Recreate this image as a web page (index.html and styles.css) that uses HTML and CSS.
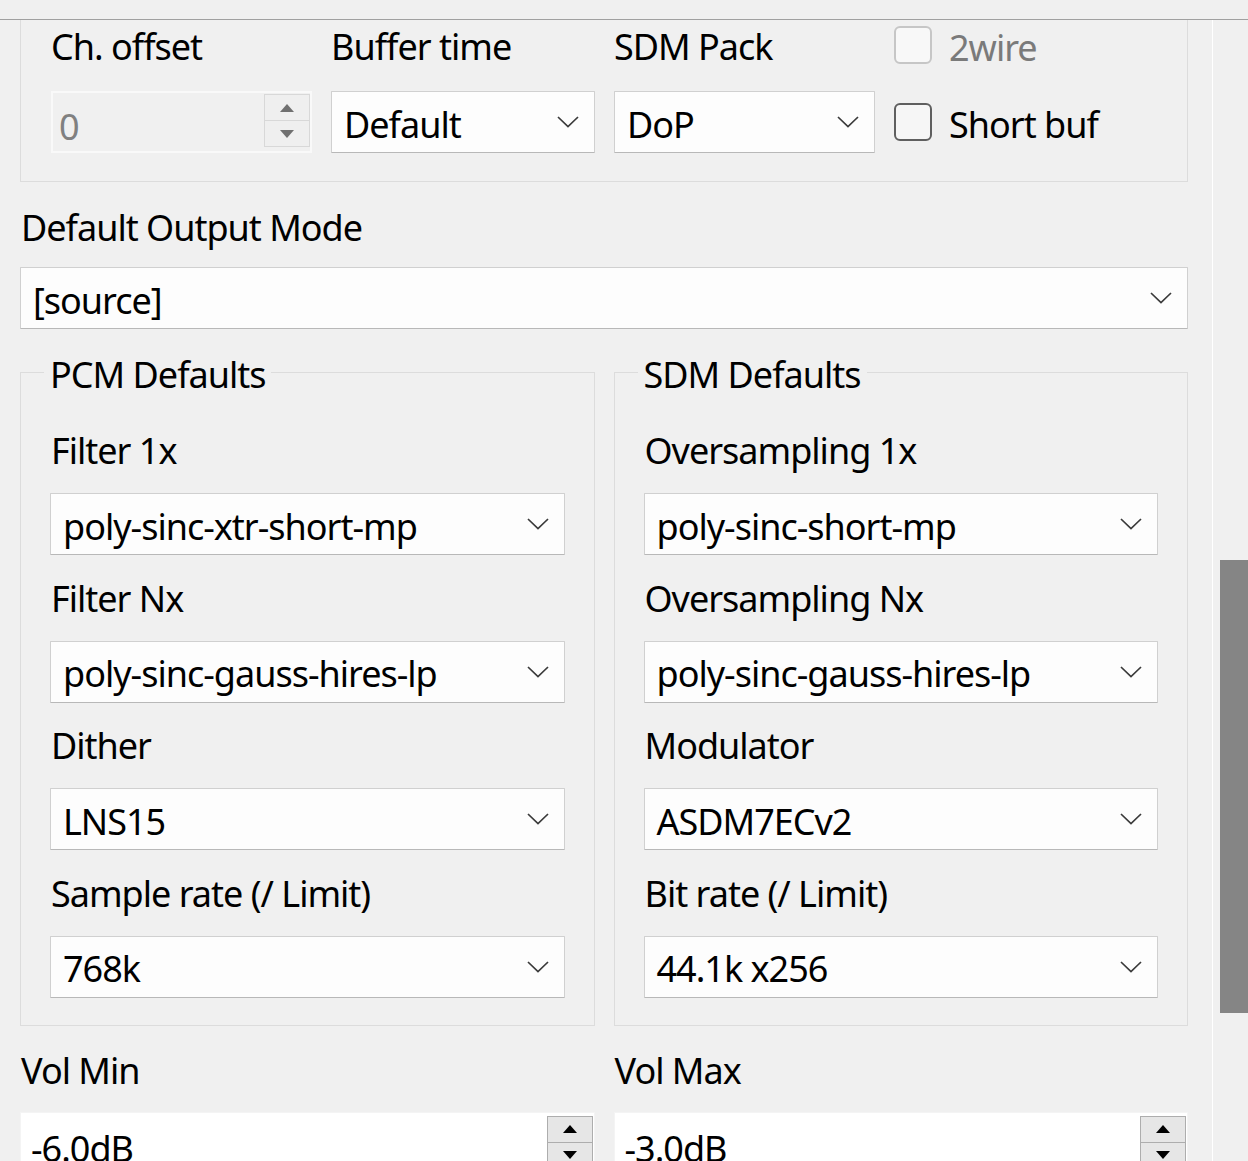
FILE: index.html
```html
<!DOCTYPE html>
<html lang="en">
<head>
    <meta charset="UTF-8">
    <meta name="viewport" content="width=device-width, initial-scale=1.0">
    <title>Output settings</title>
    <link rel="stylesheet" href="styles.css">
</head>
<body>
    <div class="topbar"></div>
    <div class="page">
        <div class="content">
            <!-- device options, top edge scrolled out of view -->
            <div class="devbox">
                <div class="devgrid">
                    <div class="lbl">Ch. offset</div>
                    <div class="lbl">Buffer time</div>
                    <div class="lbl">SDM Pack</div>
                    <label class="check disabled"><span class="box"></span><span>2wire</span></label>

                    <div class="spin disabled">
                        <span class="spin-value">0</span>
                        <span class="spin-btns">
                            <span class="spin-btn"><i class="up"></i></span>
                            <span class="spin-btn"><i class="down"></i></span>
                        </span>
                    </div>
                    <div class="combo"><span>Default</span><svg viewBox="0 0 22 12"><polyline points="1,1 11,10.5 21,1"/></svg></div>
                    <div class="combo"><span>DoP</span><svg viewBox="0 0 22 12"><polyline points="1,1 11,10.5 21,1"/></svg></div>
                    <label class="check"><span class="box"></span><span>Short buf</span></label>
                </div>
            </div>

            <div class="lbl mode-lbl">Default Output Mode</div>
            <div class="combo"><span>[source]</span><svg viewBox="0 0 22 12"><polyline points="1,1 11,10.5 21,1"/></svg></div>

            <div class="groups">
                <div class="group">
                    <div class="group-title">PCM Defaults</div>
                    <div class="fields">
                        <div class="field">
                            <div class="lbl">Filter 1x</div>
                            <div class="combo"><span>poly-sinc-xtr-short-mp</span><svg viewBox="0 0 22 12"><polyline points="1,1 11,10.5 21,1"/></svg></div>
                        </div>
                        <div class="field">
                            <div class="lbl">Filter Nx</div>
                            <div class="combo"><span>poly-sinc-gauss-hires-lp</span><svg viewBox="0 0 22 12"><polyline points="1,1 11,10.5 21,1"/></svg></div>
                        </div>
                        <div class="field">
                            <div class="lbl">Dither</div>
                            <div class="combo"><span>LNS15</span><svg viewBox="0 0 22 12"><polyline points="1,1 11,10.5 21,1"/></svg></div>
                        </div>
                        <div class="field">
                            <div class="lbl">Sample rate (/ Limit)</div>
                            <div class="combo"><span>768k</span><svg viewBox="0 0 22 12"><polyline points="1,1 11,10.5 21,1"/></svg></div>
                        </div>
                    </div>
                </div>
                <div class="group">
                    <div class="group-title">SDM Defaults</div>
                    <div class="fields">
                        <div class="field">
                            <div class="lbl">Oversampling 1x</div>
                            <div class="combo"><span>poly-sinc-short-mp</span><svg viewBox="0 0 22 12"><polyline points="1,1 11,10.5 21,1"/></svg></div>
                        </div>
                        <div class="field">
                            <div class="lbl">Oversampling Nx</div>
                            <div class="combo"><span>poly-sinc-gauss-hires-lp</span><svg viewBox="0 0 22 12"><polyline points="1,1 11,10.5 21,1"/></svg></div>
                        </div>
                        <div class="field">
                            <div class="lbl">Modulator</div>
                            <div class="combo"><span>ASDM7ECv2</span><svg viewBox="0 0 22 12"><polyline points="1,1 11,10.5 21,1"/></svg></div>
                        </div>
                        <div class="field">
                            <div class="lbl">Bit rate (/ Limit)</div>
                            <div class="combo"><span>44.1k x256</span><svg viewBox="0 0 22 12"><polyline points="1,1 11,10.5 21,1"/></svg></div>
                        </div>
                    </div>
                </div>
            </div>

            <div class="vols">
                <div class="vol">
                    <div class="lbl">Vol Min</div>
                    <div class="spin">
                        <span class="spin-value">-6.0dB</span>
                        <span class="spin-btns">
                            <span class="spin-btn"><i class="up"></i></span>
                            <span class="spin-btn"><i class="down"></i></span>
                        </span>
                    </div>
                </div>
                <div class="vol">
                    <div class="lbl">Vol Max</div>
                    <div class="spin">
                        <span class="spin-value">-3.0dB</span>
                        <span class="spin-btns">
                            <span class="spin-btn"><i class="up"></i></span>
                            <span class="spin-btn"><i class="down"></i></span>
                        </span>
                    </div>
                </div>
            </div>
        </div>
        <div class="vscroll"><div class="thumb"></div></div>
    </div>
</body>
</html>
```

FILE: styles.css
```css
html, body { margin: 0; padding: 0; height: 100%; overflow: hidden; }
body { background: #f0f0f0; color: #000; font-family: "Noto Sans", "Open Sans", sans-serif; font-size: 36px; letter-spacing: -1px; }

.topbar { height: 19px; border-bottom: 1px solid #a0a0a0; }
.page { display: flex; }
.content { width: 1212px; box-sizing: border-box; padding: 0 24px 0 20px; }
.vscroll { flex: 1; border-left: 1px solid #fff; height: 1141px; }
.thumb { margin: 540px 0 0 7px; height: 453px; background: #858585; }

.lbl { height: 50px; line-height: 50px; white-space: nowrap; }

/* top device box */
.devbox { border: 1px solid #dcdcdc; border-top: none; padding: 0 0 28px 30px; }
.devgrid { display: grid; grid-template-columns: 261px 264px 261px 1fr; grid-template-rows: 50px 62px; column-gap: 19px; row-gap: 21px; }
.devgrid .lbl { padding-top: 2px; }

.check { display: flex; align-items: center; gap: 17px; height: 50px; }
.check .box { width: 34px; height: 34px; border: 2px solid #5f5f5f; border-radius: 6px; background: #f6f6f6; }
.check.disabled { color: #7a7a7a; }
.check.disabled .box { border-color: #c6c6c6; background: #f8f8f8; }
.devgrid .check:last-child { height: 62px; }
.check span + span { padding-top: 4px; }

/* combo box */
.combo { height: 62px; box-sizing: border-box; border: 1px solid #d0d0d0; border-bottom-color: #b8b8b8; border-radius: 1px; background: #fdfdfd; display: flex; align-items: center; justify-content: space-between; padding: 0 15px 0 12px; white-space: nowrap; }
.combo span { padding-top: 4px; }
.combo svg { width: 22px; height: 12px; flex: none; }
.combo polyline { fill: none; stroke: #3a3a3a; stroke-width: 1.7; }

/* spin box */
.spin { height: 62px; box-sizing: border-box; background: #fff; border: 1px solid #f4f4f4; display: flex; justify-content: space-between; padding: 3px 1px 0 10px; }
.spin-value { line-height: 58px; padding-top: 4px; }
.spin-btns { width: 46px; display: flex; flex-direction: column; }
.spin-btn { height: 25px; border: 1px solid #adadad; background: #e6e6e6; display: flex; align-items: center; justify-content: center; }
.spin-btn + .spin-btn { border-top: none; }
.spin-btn i { width: 0; height: 0; border-left: 7px solid transparent; border-right: 7px solid transparent; }
.spin-btn .up { border-bottom: 8px solid #000; }
.spin-btn .down { border-top: 8px solid #000; }

.spin.disabled { background: #f0f0f0; border: 2px solid #f9f9f9; padding: 1px 0 4px 6px; color: #808080; }
.spin.disabled .spin-value { line-height: 54px; padding-top: 6px; }
.spin.disabled .spin-btn { height: 25px; border-color: #d8d8d8; background: #efefef; }
.spin.disabled .up { border-bottom-color: #707070; }
.spin.disabled .down { border-top-color: #707070; }

.mode-lbl { margin: 21px 0 14px 1px; }

/* group boxes */
.groups { display: grid; grid-template-columns: 1fr 1fr; column-gap: 19px; margin-top: 43px; }
.group { border: 1px solid #dcdcdc; padding: 0 29px 27px 29px; }
.group-title { width: fit-content; height: 50px; line-height: 50px; margin: -23px 0 0 -6px; padding: 0 6px; background: #f0f0f0; }
.fields { display: flex; flex-direction: column; gap: 18.5px; margin-top: 26px; }
.field .lbl { margin: 0 0 17px 1px; }

/* volume */
.vols { display: grid; grid-template-columns: 1fr 1fr; column-gap: 19px; margin-top: 20px; }
.vol .lbl { margin: 0 0 16px 1px; }
```
